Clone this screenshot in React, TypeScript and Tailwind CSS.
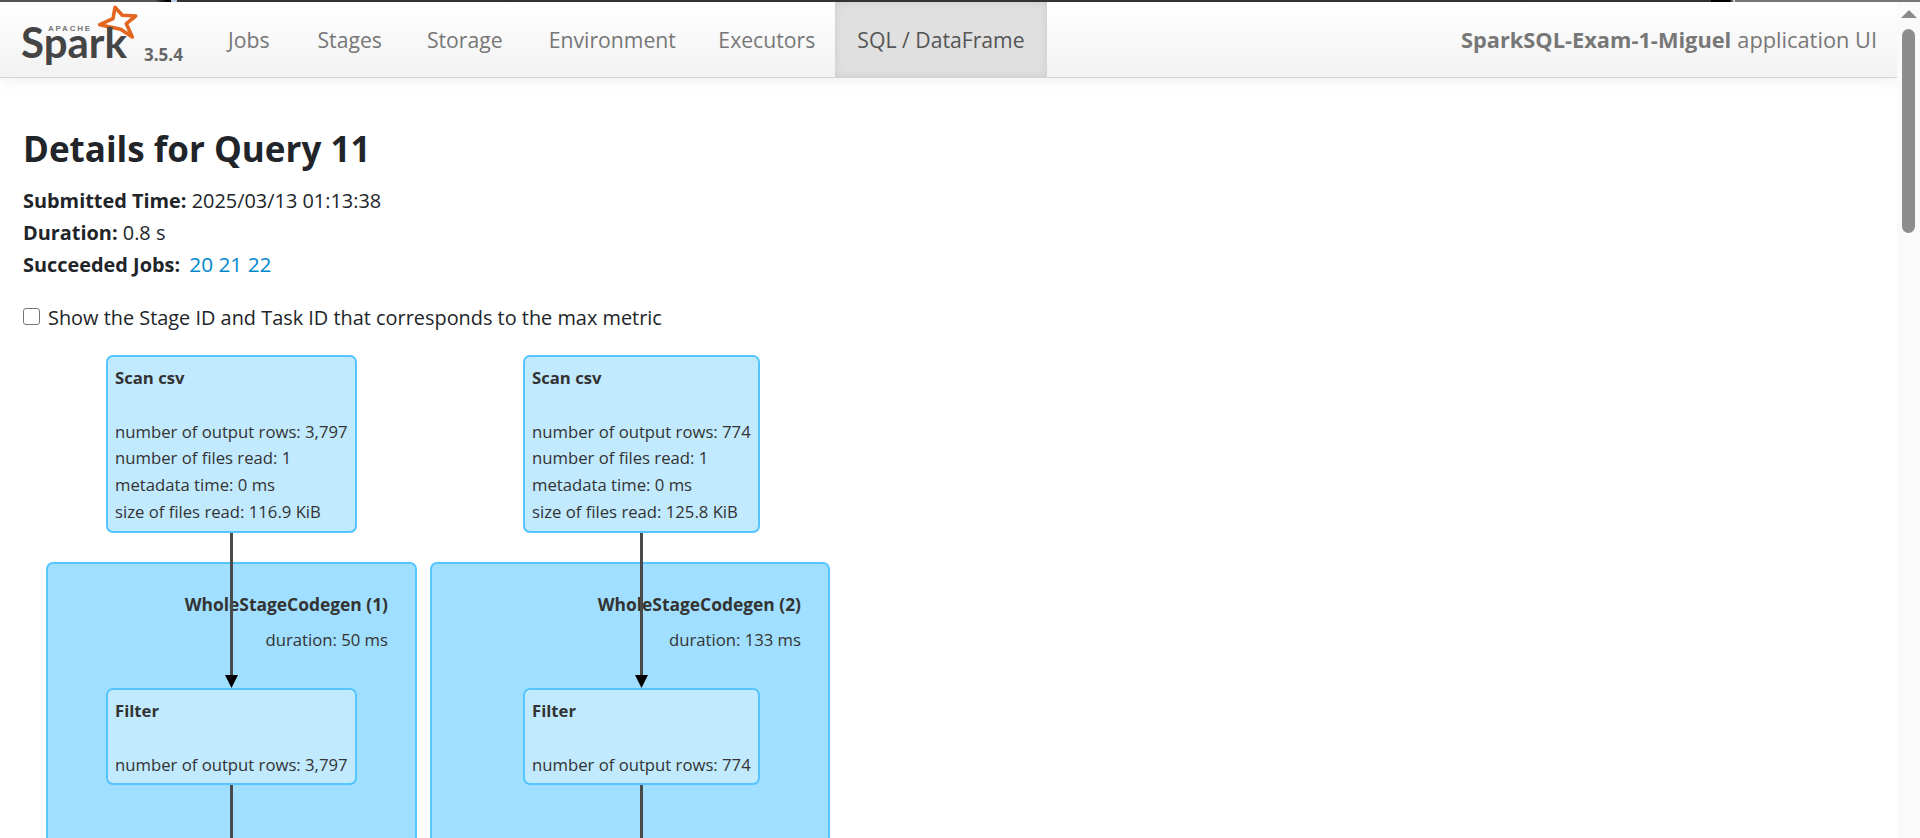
const sans = 'font-["Open_Sans",sans-serif]';

const tabs = [
  { label: 'Jobs', pad: 'pl-[22.5px] pr-[25.5px]' },
  { label: 'Stages', pad: 'px-[22.5px]' },
  { label: 'Storage', pad: 'px-[22.5px]' },
  { label: 'Environment', pad: 'pl-[23.5px] pr-[20.5px]' },
  { label: 'Executors', pad: 'pl-[22px] pr-[20px]' },
];

type NodeProps = {
  title: string;
  lines: string[];
  className: string;
};

// boxes of the query plan, placed on the graph canvas
const PlanNode = ({ title, lines, className }: NodeProps) => (
  <div className={`absolute rounded-[7px] border-2 border-[#55c5ff] bg-[#c1eaff] pl-[7px] pt-[8px] text-[16.7px] leading-[26.7px] text-[#333] ${className}`}>
    <div className="font-bold">{title}</div>
    <div className="h-[27px]" />
    {lines.map((line) => (
      <div key={line}>{line}</div>
    ))}
  </div>
);

const Cluster = ({ title, duration, className }: { title: string; duration: string; className: string }) => (
  <div className={`absolute bottom-[-40px] top-[207px] rounded-[7px] border-2 border-[#55c5ff] bg-[#a0dfff] text-right text-[16.7px] text-[#333] ${className}`}>
    <div className="pt-[27px] text-[17.4px] font-bold leading-[26px]">{title}</div>
    <div className="pt-[10px] leading-[26px]">{duration}</div>
  </div>
);

const Edge = ({ className }: { className: string }) => (
  <div className={`absolute flex w-[15px] flex-col items-center ${className}`}>
    <div className="w-[3px] flex-1 bg-[#4a4a4a]" />
    <svg width="15" height="13" viewBox="0 0 15 13" className="-mt-px">
      <path d="M1 0h13L7.5 13z" fill="#000" />
    </svg>
  </div>
);

const SparkLogo = () => (
  <div className="relative h-[64px] w-[134px] shrink-0 text-[#444]">
    <svg width="44" height="38" viewBox="0 0 44 38" className="absolute left-[86px] top-[2px]">
      <path
        d="M19 3.3 L26.3 11.3 L39.7 12 L30.3 19.7 L36.3 33 L24.7 25.3 L3.7 20.7 L17 14.7 Z"
        fill="#fff"
        stroke="#e2661f"
        strokeWidth="3.6"
        strokeLinejoin="round"
      />
    </svg>
    <span className='absolute left-[38px] top-[23px] font-["Liberation_Sans",sans-serif] text-[8px] font-bold leading-[8px] tracking-[1.8px] text-[#777]'>
      APACHE
    </span>
    <span className='absolute left-[11px] top-[33px] font-["Lato",sans-serif] text-[42px] font-bold leading-[14px]'>
      Spark
    </span>
  </div>
);

const App = () => {
  return (
    <div className={`flex h-[838px] flex-col overflow-hidden bg-white text-[#212529] ${sans}`}>
      {/* dark strip left over at the top of the window */}
      <div className="flex h-[2px] shrink-0">
        <div className="w-[155px] bg-[#555]" />
        <div className="w-[16px] bg-gradient-to-r from-[#555] to-black" />
        <div className="w-[6px] bg-[#b8cfe8]" />
        <div className="flex-1 bg-[#333]" />
        <div className="w-[18px] bg-black" />
        <div className="w-[6px] bg-gradient-to-r from-black to-white" />
        <div className="w-[185px] bg-[#777]" />
      </div>
      <div className="flex min-h-0 flex-1">
        <div className="flex min-w-0 flex-1 flex-col">
          <nav className="flex h-[76px] shrink-0 items-stretch border-b border-[#d4d4d4] bg-gradient-to-b from-white to-[#f2f2f2] shadow-[0_4px_12px_rgba(0,0,0,0.06)]">
            <div className="flex w-[205.5px] shrink-0 items-start pl-[10px]">
              <SparkLogo />
              <span className="mt-[43px] text-[17px] font-bold leading-[20px] text-[#666]">3.5.4</span>
            </div>
            {tabs.map((tab) => (
              <a key={tab.label} className={`flex items-center pt-[1px] text-[21.2px] text-[#777] ${tab.pad}`}>
                {tab.label}
              </a>
            ))}
            <a className="flex items-center bg-[#e0e0e0] px-[22px] pt-[1px] text-[21.2px] text-[#555] shadow-[inset_0_0_8px_rgba(0,0,0,0.1)]">
              SQL / DataFrame
            </a>
            <div className="ml-auto flex items-center pr-[20px] pt-[1px] text-[21.8px] text-[#777]">
              <strong className="mr-[6px] font-bold">SparkSQL-Exam-1-Miguel</strong> application UI
            </div>
          </nav>

          <main className="relative min-h-0 flex-1 px-[23px]">
            <h3 className="mt-[50px] text-[35px] font-bold leading-[42px]">Details for Query 11</h3>
            <ul className="mt-[15px] text-[19.9px] leading-[32px]">
              <li><strong>Submitted Time:</strong> 2025/03/13 01:13:38</li>
              <li><strong>Duration:</strong> 0.8 s</li>
              <li>
                <strong>Succeeded Jobs:</strong>{' '}
                <span className="ml-[4px] text-[20.8px] leading-none text-[#0088cc]">20 21 22</span>
              </li>
            </ul>
            <label className="mt-[21px] flex items-center gap-[8px] text-[19.9px] leading-[32px]">
              <span className="-mt-[4px] h-[17px] w-[17px] rounded-[3px] border border-[#767676] bg-white" />
              Show the Stage ID and Task ID that corresponds to the max metric
            </label>

            <div className="absolute inset-x-0 bottom-0 top-[277px]">
              <PlanNode
                title="Scan csv"
                lines={['number of output rows: 3,797', 'number of files read: 1', 'metadata time: 0 ms', 'size of files read: 116.9 KiB']}
                className="left-[106px] top-0 h-[178px] w-[251px]"
              />
              <PlanNode
                title="Scan csv"
                lines={['number of output rows: 774', 'number of files read: 1', 'metadata time: 0 ms', 'size of files read: 125.8 KiB']}
                className="left-[523px] top-0 h-[178px] w-[237px]"
              />
              <Cluster title="WholeStageCodegen (1)" duration="duration: 50 ms" className="left-[46px] w-[371px] pr-[27px]" />
              <Cluster title="WholeStageCodegen (2)" duration="duration: 133 ms" className="left-[430px] w-[400px] pr-[27px]" />
              <PlanNode
                title="Filter"
                lines={['number of output rows: 3,797']}
                className="left-[106px] top-[333px] h-[97px] w-[251px]"
              />
              <PlanNode
                title="Filter"
                lines={['number of output rows: 774']}
                className="left-[523px] top-[333px] h-[97px] w-[237px]"
              />
              <Edge className="left-[224px] top-[178px] h-[155px]" />
              <Edge className="left-[634px] top-[178px] h-[155px]" />
              <div className="absolute bottom-0 left-[230px] top-[430px] w-[3px] bg-[#4a4a4a]" />
              <div className="absolute bottom-0 left-[640px] top-[430px] w-[3px] bg-[#4a4a4a]" />
            </div>
          </main>
        </div>

        {/* page scrollbar */}
        <div className="flex w-[23px] shrink-0 flex-col items-center bg-[#fafafa] pt-[8px]">
          <svg width="16" height="8" viewBox="0 0 16 8">
            <path d="M8 0l8 8H0z" fill="#8a8a8a" />
          </svg>
          <div className="mt-[11px] h-[204px] w-[13px] rounded-full bg-[#8d8d8d]" />
        </div>
      </div>
    </div>
  );
};

export default App;
